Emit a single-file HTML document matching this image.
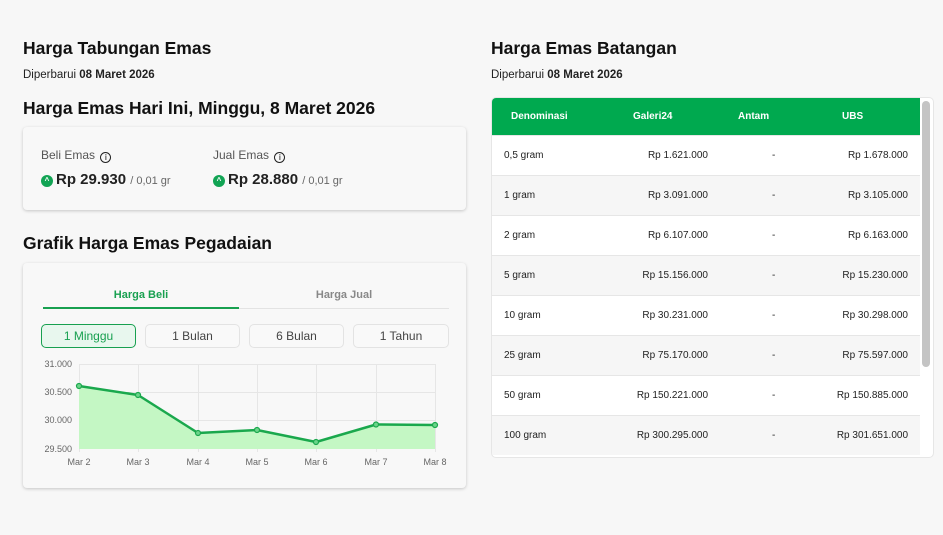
<!DOCTYPE html>
<html><head><meta charset="utf-8"><style>
*{box-sizing:border-box;margin:0;padding:0}
body{width:943px;height:535px;background:#f7f7f7;font-family:"Liberation Sans",sans-serif;color:#111;position:relative;overflow:hidden}
.a{position:absolute}
h2{font-size:17.5px;font-weight:bold;color:#111;position:absolute;white-space:nowrap}
.sub{font-size:11.5px;color:#222;position:absolute}
.card{position:absolute;background:#f8f8f8;border-radius:4px;box-shadow:0 1px 3px rgba(0,0,0,.2)}
.lbl{font-size:12px;color:#555}
.info{display:inline-block;width:11px;height:11px;border:1.3px solid #222;border-radius:50%;font-size:8px;text-align:center;line-height:9px;font-weight:bold;vertical-align:-1px;margin-left:2px}
.price{font-size:15px;font-weight:bold;color:#222}
.dot{display:inline-block;width:12px;height:12px;border-radius:50%;background:#12a454;color:#fff;font-size:8px;text-align:center;line-height:12px;vertical-align:1px;margin-right:3px}
.small{font-size:11px;color:#666;font-weight:normal}
.btn{position:absolute;top:324px;height:24px;border:1px solid #e3e3e3;border-radius:5px;font-size:12px;color:#444;text-align:center;line-height:22px;background:#f9f9f9}
table{border-collapse:collapse;width:428px;font-size:10px}
th{background:#00a94f;color:#fff;height:37px;font-weight:bold;text-align:left}
td{height:40px;border-top:1px solid #e6e6e6;color:#222}
tr:nth-child(odd) td{background:#f6f6f6}
tr:nth-child(even) td{background:#fff}
.r{text-align:right}
td.g{padding-right:7px}
td.d{padding-left:57px}
</style></head><body>
<h2 style="left:23px;top:38px">Harga Tabungan Emas</h2>
<div class="sub" style="left:23px;top:69px">Diperbarui <b>08 Maret 2026</b></div>
<h2 style="left:23px;top:98px">Harga Emas Hari Ini, Minggu, 8 Maret 2026</h2>
<div class="card" style="left:23px;top:127px;width:443px;height:83px">
 <div class="a lbl" style="left:18px;top:21px">Beli Emas <span class="info">i</span></div>
 <div class="a price" style="left:18px;top:44px"><span class="dot">^</span>Rp 29.930 <span class="small">/ 0,01 gr</span></div>
 <div class="a lbl" style="left:190px;top:21px">Jual Emas <span class="info">i</span></div>
 <div class="a price" style="left:190px;top:44px"><span class="dot">^</span>Rp 28.880 <span class="small">/ 0,01 gr</span></div>
</div>
<h2 style="left:23px;top:233px">Grafik Harga Emas Pegadaian</h2>
<div class="card" style="left:23px;top:263px;width:443px;height:225px"></div>
<div class="a" style="left:43px;top:289px;width:196px;text-align:center;font-size:11px;font-weight:bold;color:#18a050">Harga Beli</div>
<div class="a" style="left:239px;top:289px;width:210px;text-align:center;font-size:11px;font-weight:bold;color:#888">Harga Jual</div>
<div class="a" style="left:43px;top:308px;width:406px;height:1px;background:#e3e3e3"></div>
<div class="a" style="left:43px;top:307px;width:196px;height:2px;background:#18a050"></div>
<div class="btn" style="left:41px;width:95px;border-color:#18a050;background:#e8f7ee;color:#18a050">1 Minggu</div>
<div class="btn" style="left:145px;width:95px">1 Bulan</div>
<div class="btn" style="left:249px;width:95px">6 Bulan</div>
<div class="btn" style="left:353px;width:96px">1 Tahun</div>
<svg class="a" style="left:0;top:0" width="943" height="535">
<g stroke="#e6e6e6" stroke-width="1">
<line x1="79" y1="364.5" x2="435" y2="364.5"/><line x1="79" y1="392.5" x2="435" y2="392.5"/><line x1="79" y1="420.5" x2="435" y2="420.5"/>
<line x1="79.5" y1="364" x2="79.5" y2="452"/><line x1="138.5" y1="364" x2="138.5" y2="452"/><line x1="198.5" y1="364" x2="198.5" y2="452"/><line x1="257.5" y1="364" x2="257.5" y2="452"/><line x1="316.5" y1="364" x2="316.5" y2="452"/><line x1="376.5" y1="364" x2="376.5" y2="452"/><line x1="435.5" y1="364" x2="435.5" y2="452"/>
</g>
<polygon points="79,386 138,395 198,433 257,430 316,442 376,424.5 435,425 435,449 79,449" fill="#c4f7c4"/>
<polyline points="79,386 138,395 198,433 257,430 316,442 376,424.5 435,425" fill="none" stroke="#1aa84d" stroke-width="2.5" stroke-linejoin="round"/>
<g fill="#6cd48a" stroke="#1aa84d" stroke-width="1.2">
<circle cx="79" cy="386" r="2.5"/><circle cx="138" cy="395" r="2.5"/><circle cx="198" cy="433" r="2.5"/><circle cx="257" cy="430" r="2.5"/><circle cx="316" cy="442" r="2.5"/><circle cx="376" cy="424.5" r="2.5"/><circle cx="435" cy="425" r="2.5"/></g>
<g font-family="Liberation Sans" font-size="9" fill="#666" text-anchor="end">
<text x="72" y="367">31.000</text><text x="72" y="395">30.500</text><text x="72" y="423">30.000</text><text x="72" y="452">29.500</text></g>
<g font-family="Liberation Sans" font-size="9" fill="#666" text-anchor="middle">
<text x="79" y="465">Mar 2</text><text x="138" y="465">Mar 3</text><text x="198" y="465">Mar 4</text><text x="257" y="465">Mar 5</text><text x="316" y="465">Mar 6</text><text x="376" y="465">Mar 7</text><text x="435" y="465">Mar 8</text></g>
</svg>
<h2 style="left:491px;top:38px">Harga Emas Batangan</h2>
<div class="sub" style="left:491px;top:69px">Diperbarui <b>08 Maret 2026</b></div>
<div class="a" style="left:491px;top:97px;width:443px;height:361px;border:1px solid #e6e6e6;border-radius:5px;overflow:hidden;background:#fff">
<table>
<tr><th style="padding-left:19px;width:130px">Denominasi</th><th style="padding-left:11px;width:93px">Galeri24</th><th style="padding-left:23px;width:90px">Antam</th><th style="padding-left:37px">UBS</th></tr>
<tr><td style="padding-left:12px">0,5 gram</td><td class="r g">Rp 1.621.000</td><td class="d">-</td><td class="r" style="padding-right:12px">Rp 1.678.000</td></tr>
<tr><td style="padding-left:12px">1 gram</td><td class="r g">Rp 3.091.000</td><td class="d">-</td><td class="r" style="padding-right:12px">Rp 3.105.000</td></tr>
<tr><td style="padding-left:12px">2 gram</td><td class="r g">Rp 6.107.000</td><td class="d">-</td><td class="r" style="padding-right:12px">Rp 6.163.000</td></tr>
<tr><td style="padding-left:12px">5 gram</td><td class="r g">Rp 15.156.000</td><td class="d">-</td><td class="r" style="padding-right:12px">Rp 15.230.000</td></tr>
<tr><td style="padding-left:12px">10 gram</td><td class="r g">Rp 30.231.000</td><td class="d">-</td><td class="r" style="padding-right:12px">Rp 30.298.000</td></tr>
<tr><td style="padding-left:12px">25 gram</td><td class="r g">Rp 75.170.000</td><td class="d">-</td><td class="r" style="padding-right:12px">Rp 75.597.000</td></tr>
<tr><td style="padding-left:12px">50 gram</td><td class="r g">Rp 150.221.000</td><td class="d">-</td><td class="r" style="padding-right:12px">Rp 150.885.000</td></tr>
<tr><td style="padding-left:12px">100 gram</td><td class="r g">Rp 300.295.000</td><td class="d">-</td><td class="r" style="padding-right:12px">Rp 301.651.000</td></tr>
</table>
<div class="a" style="left:430px;top:3px;width:8px;height:266px;background:#c4c4c4;border-radius:4px"></div>
</div>
</body></html>
